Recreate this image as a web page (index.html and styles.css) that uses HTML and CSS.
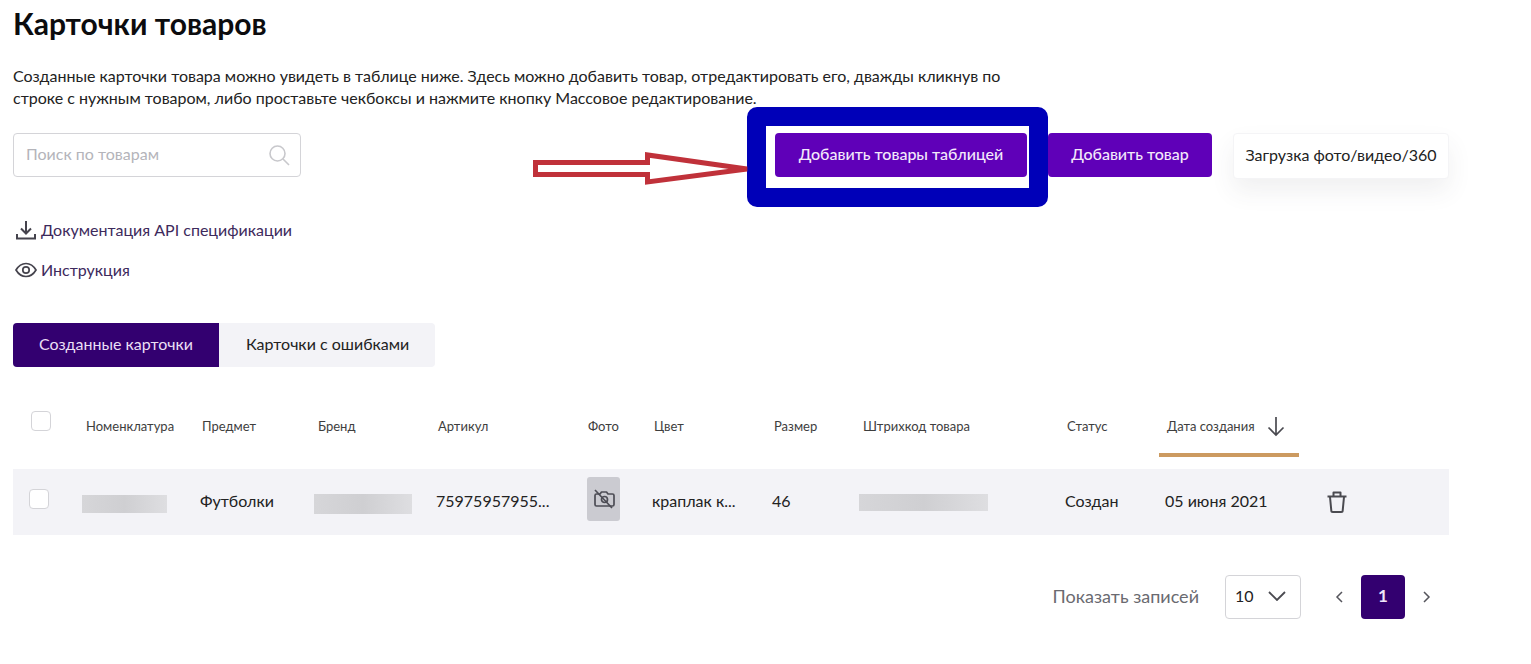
FILE: index.html
```html
<!DOCTYPE html>
<html lang="ru">
<head>
<meta charset="utf-8">
<title>Карточки товаров</title>
<link rel="stylesheet" href="styles.css">
</head>
<body>
<main class="page">
  <h1 class="title">Карточки товаров</h1>
  <p class="intro">Созданные карточки товара можно увидеть в таблице ниже. Здесь можно добавить товар, отредактировать его, дважды кликнув по строке с нужным товаром, либо проставьте чекбоксы и нажмите кнопку Массовое редактирование.</p>

  <div class="toolbar">
    <div class="search">
      <span class="search-text">Поиск по товарам</span>
      <svg class="search-icon" width="22" height="22" viewBox="0 0 22 22" fill="none" stroke="#c8c8cc" stroke-width="1.6"><circle cx="9.5" cy="9.5" r="7.5"/><path d="M15 15l6 6"/></svg>
    </div>
    <div class="actions">
      <button class="btn btn-table">Добавить товары таблицей</button>
      <button class="btn btn-add">Добавить товар</button>
      <button class="btn-upload">Загрузка фото/видео/360</button>
    </div>
  </div>

  <a class="link link-doc">
    <svg width="22" height="22" viewBox="0 0 22 22" fill="none" stroke="#45434d" stroke-width="2"><path d="M11 2v12M6 9.5l5 5 5-5"/><path d="M2 15v4.5h18V15"/></svg>
    <span>Документация API спецификации</span>
  </a>
  <a class="link link-help">
    <svg width="22" height="16" viewBox="0 0 22 16" fill="none" stroke="#45434d" stroke-width="1.7"><path d="M1 8c2.6-4.4 6-6.5 10-6.5S18.400 3.600 21 8c-2.600 4.400-6 6.500-10 6.500S3.600 12.400 1 8z"/><circle cx="11" cy="8" r="3.200"/></svg>
    <span>Инструкция</span>
  </a>

  <div class="tabs">
    <div class="tab tab-active">Созданные карточки</div>
    <div class="tab">Карточки с ошибками</div>
  </div>

  <div class="thead">
    <span class="check check-head"></span>
    <span>Номенклатура</span>
    <span>Предмет</span>
    <span>Бренд</span>
    <span>Артикул</span>
    <span>Фото</span>
    <span>Цвет</span>
    <span>Размер</span>
    <span>Штрихкод товара</span>
    <span>Статус</span>
    <span class="sorted">Дата создания
      <svg width="20" height="22" viewBox="0 0 20 22" fill="none" stroke="#4a4a50" stroke-width="1.700"><path d="M10 2v18M2.500 12.500l7.500 7.500 7.500-7.500"/></svg>
    </span>
  </div>

  <div class="trow">
    <span class="check"></span>
    <span class="blur blur-name"></span>
    <span class="cell">Футболки</span>
    <span class="blur blur-brand"></span>
    <span class="cell">75975957955...</span>
    <span class="photo">
      <svg width="22" height="20" viewBox="0 0 22 20" fill="none" stroke="#4d4d55" stroke-width="1.700" stroke-linejoin="round"><path d="M7 5l1.500-2h5L15 5h4.500A1.500 1.500 0 0 1 21 6.500v9a1.500 1.500 0 0 1-1.500 1.500h-16A1.500 1.500 0 0 1 2 15.500v-9A1.500 1.500 0 0 1 3.500 5z"/><circle cx="11.500" cy="10.500" r="3"/><path d="M2 1l17 18"/></svg>
    </span>
    <span class="cell">краплак к...</span>
    <span class="cell">46</span>
    <span class="blur blur-code"></span>
    <span class="cell">Создан</span>
    <span class="cell">05 июня 2021</span>
    <svg class="trash" width="22" height="24" viewBox="0 0 22 24" fill="none" stroke="#4a4a50" stroke-width="2" stroke-linejoin="round"><path d="M1.500 6.500h19"/><path d="M7.500 6V2.500h7V6"/><path d="M4 7l1.300 13.500a1.500 1.500 0 0 0 1.500 1.500h8.400a1.500 1.500 0 0 0 1.500-1.500L18 7"/></svg>
  </div>

  <div class="pager">
    <span class="pager-label">Показать записей</span>
    <div class="select">
      <span>10</span>
      <svg width="18" height="10" viewBox="0 0 18 10" fill="none" stroke="#4a4a50" stroke-width="1.800"><path d="M1 1l8 8 8-8"/></svg>
    </div>
    <svg class="chev chev-prev" width="8" height="12" viewBox="0 0 8 12" fill="none" stroke="#55555c" stroke-width="1.500"><path d="M7 1L2 6l5 5"/></svg>
    <span class="page-current">1</span>
    <svg class="chev chev-next" width="8" height="12" viewBox="0 0 8 12" fill="none" stroke="#55555c" stroke-width="1.500"><path d="M1 1l5 5-5 5"/></svg>
  </div>
</main>

<div class="frame"></div>
<svg class="arrow" width="220" height="36" viewBox="0 0 220 36" fill="none" stroke="#c0313a" stroke-width="5" stroke-linejoin="miter"><path d="M2.500 10.500h112V3L214 17 114.500 30V22.500H2.500z"/></svg>
</body>
</html>
```

FILE: styles.css
```css
* { box-sizing: border-box; }
html, body { margin: 0; background: #fff; }
body {
  position: relative;
  width: 1531px;
  height: 664px;
  overflow: hidden;
  font-family: Lato, "Open Sans", "Noto Sans", sans-serif;
  color: #1c1c1e;
}
.page { padding: 0 82px 0 13px; }
.title {
  margin: 0;
  padding-top: 6px;
  font-size: 30px;
  line-height: 34px;
  font-weight: 700;
  color: #0c0c0e;
}
.intro {
  width: 1000px;
  margin: 25px 0 0;
  font-size: 16px;
  line-height: 22px;
  color: #222;
}
.toolbar {
  display: flex;
  justify-content: space-between;
  align-items: flex-start;
  margin-top: 24px;
}
.search {
  width: 288px;
  height: 44px;
  border: 1px solid #d4d4d8;
  border-radius: 4px;
  display: flex;
  align-items: center;
  justify-content: space-between;
  padding: 0 10px 0 12px;
  font-size: 16px;
  color: #b4b4ba;
}
.search-text { margin-top: -4px; }
.actions { display: flex; align-items: flex-start; }
button { font-family: inherit; border: 0; }
.btn {
  height: 44px;
  padding-bottom: 4px;
  border-radius: 4px;
  background: #5f00b8;
  color: #f3e8fb;
  font-size: 16px;
  font-weight: 500;
}
.btn-table { width: 252px; }
.btn-add { width: 164px; margin-left: 21px; }
.btn-upload {
  width: 216px;
  height: 46px;
  padding-bottom: 4px;
  margin-left: 21px;
  background: #fff;
  color: #222;
  font-size: 16px;
  border-radius: 4px;
  border: 1px solid #f4f4f6;
  box-shadow: 0 12px 24px rgba(60, 60, 80, 0.08);
}
.link {
  display: flex;
  align-items: center;
  gap: 4px;
  font-size: 16px;
  line-height: 22px;
  color: #3d2a5c;
}
.link svg { flex: none; }
.link-doc { margin-top: 40px; padding-left: 2px; }
.link-help { margin-top: 18px; padding-left: 2px; }
.tabs {
  display: flex;
  width: 422px;
  height: 44px;
  margin-top: 42px;
  background: #f3f3f7;
  border-radius: 4px;
  font-size: 16px;
  color: #222;
}
.tab {
  display: flex;
  align-items: center;
  padding-left: 27px;
  padding-bottom: 3px;
  flex: 1;
}
.tab-active {
  flex: none;
  width: 206px;
  padding-left: 26px;
  background: #330070;
  color: #eadff5;
  border-radius: 4px 0 0 4px;
}
.thead, .trow {
  display: grid;
  align-items: center;
}
.thead {
  grid-template-columns: 55px 116px 116px 120px 150px 66px 120px 89px 204px 100px 132px;
  height: 90px;
  padding-top: 28px;
  padding-left: 18px;
  margin-bottom: 12px;
  font-size: 13px;
  color: #3e3e3e;
}
.check {
  display: block;
  width: 20px;
  height: 20px;
  background: #fff;
  border: 1px solid #d4d4d8;
  border-radius: 4px;
}
.check-head { margin-top: -10px; }
.sorted {
  display: flex;
  align-items: center;
  justify-content: flex-start;
  gap: 11px;
  position: relative;
  height: 100%;
}
.sorted::after {
  content: "";
  position: absolute;
  left: -8px;
  bottom: 0;
  width: 140px;
  height: 4px;
  background: #cc9a60;
}
.trow {
  grid-template-columns: 53px 118px 114px 122px 151px 65px 120px 87px 206px 100px 162px 30px;
  height: 66px;
  padding-left: 16px;
  background: #f3f3f7;
  font-size: 16px;
  color: #222;
}
.cell { margin-top: -4px; }
.trow .check { margin-top: -6px; }
.blur {
  display: block;
  height: 18px;
  margin-top: 3px;
  background: linear-gradient(90deg, #d6d6d9, #cfcfd2 50%, #dedee1);
  filter: blur(0.4px);
}
.blur-name { width: 85px; }
.blur-brand { width: 98px; height: 20px; }
.blur-code { width: 129px; height: 17px; margin-top: 0; }
.photo {
  display: flex;
  align-items: center;
  justify-content: center;
  width: 33px;
  height: 44px;
  margin-top: -6px;
  background: #cbcbd1;
  border-radius: 3px;
}
.trash { margin-left: -1px; }
.pager {
  display: flex;
  align-items: center;
  justify-content: flex-end;
  margin-top: 40px;
  padding-right: 18px;
  font-size: 18px;
}
.pager-label { color: #6a6a70; margin-top: -2px; }
.select {
  display: flex;
  align-items: center;
  justify-content: space-between;
  width: 76px;
  height: 44px;
  margin-left: 26px;
  padding: 0 14px 3px 9px;
  border: 1px solid #d4d4d8;
  border-radius: 4px;
  font-size: 16px;
  color: #222;
}
.chev-prev { margin-left: 34px; }
.page-current {
  display: flex;
  align-items: center;
  justify-content: center;
  width: 44px;
  height: 44px;
  margin: 0 18px;
  padding-bottom: 3px;
  background: #330070;
  border-radius: 4px;
  color: #f0e6fa;
  font-weight: 700;
  font-size: 17px;
}
.frame {
  position: absolute;
  left: 747px;
  top: 107px;
  width: 301px;
  height: 100px;
  border: 19px solid #0000b8;
  border-radius: 10px;
  pointer-events: none;
}
.arrow {
  position: absolute;
  left: 533px;
  top: 152px;
}
```
